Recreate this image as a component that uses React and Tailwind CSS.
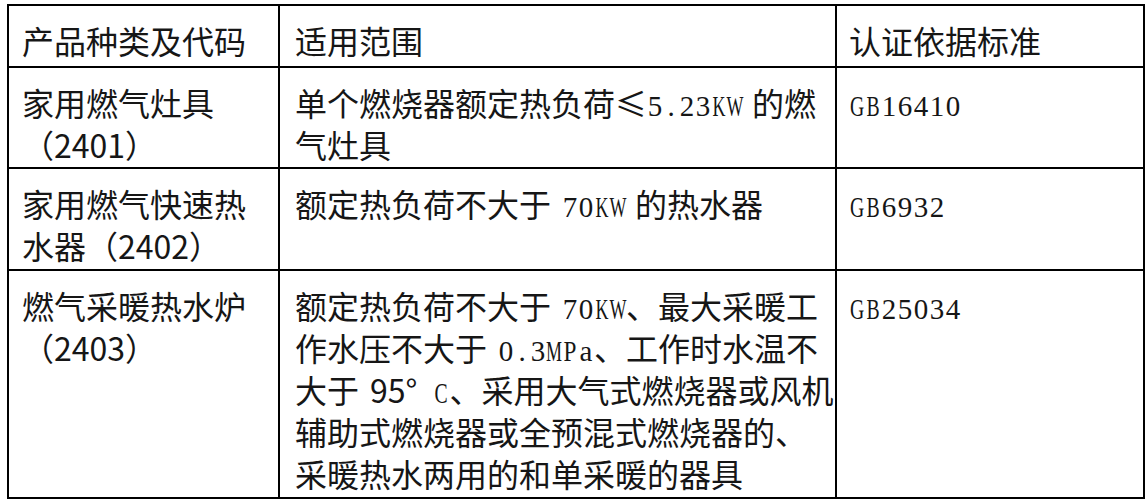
import React from "react";

const SCALE = {
  W: "scale-x-[0.62]",
  M: "scale-x-[0.62]",
  K: "scale-x-[0.62]",
  G: "scale-x-[0.68]",
  B: "scale-x-[0.68]",
  C: "scale-x-[0.68]",
  P: "scale-x-[0.8]",
};

const Gap = ({ w = "w-[11px]" }) => (
  <span className={`inline-block ${w} leading-[0px]`}>{"\u00a0"}</span>
);

const M = ({ children }) => (
  <span className="font-['Liberation_Serif',serif] text-[29px] leading-[0px]">
    {String(children)
      .split("")
      .map((c, i) => (
        <span
          key={i}
          className={`inline-flex w-[16px] justify-center leading-[0px] ${SCALE[c] || ""}`}
        >
          {c === " " ? "\u00a0" : c}
        </span>
      ))}
  </span>
);

const Cell = ({ children, pl = "pl-[13px]" }) => (
  <div className={`bg-white ${pl} pt-[13px] leading-[42px] whitespace-nowrap`}>{children}</div>
);

export default function App() {
  return (
    <div className="w-[1148px] h-[500px] bg-white pl-[7px] pt-[4px] font-['Noto_Sans_CJK_SC',sans-serif] text-[32px] font-normal text-[#161616]">
      <div className="grid w-fit grid-cols-[269px_555px_306px] grid-rows-[60px_99px_100px_226px] gap-[2px] bg-black p-[2px]">
        <Cell>产品种类及代码</Cell>
        <Cell pl="pl-[15px]">适用范围</Cell>
        <Cell pl="pl-[12px]">认证依据标准</Cell>

        <Cell>
          家用燃气灶具
          <br />
          （2401）
        </Cell>
        <Cell pl="pl-[15px]">
          单个燃烧器额定热负荷≤<M>5.23KW</M>
          <Gap w="w-[9px]" />
          的燃
          <br />
          气灶具
        </Cell>
        <Cell pl="pl-[12px]">
          <M>GB16410</M>
        </Cell>

        <Cell>
          家用燃气快速热
          <br />
          水器（2402）
        </Cell>
        <Cell pl="pl-[15px]">
          额定热负荷不大于
          <Gap />
          <M>70KW</M>
          <Gap w="w-[9px]" />
          的热水器
        </Cell>
        <Cell pl="pl-[12px]">
          <M>GB6932</M>
        </Cell>

        <Cell>
          燃气采暖热水炉
          <br />
          （2403）
        </Cell>
        <Cell pl="pl-[15px]">
          额定热负荷不大于
          <Gap />
          <M>70KW</M>、最大采暖工
          <br />
          作水压不大于
          <Gap />
          <M>0.3MPa</M>、工作时水温不
          <br />
          大于
          <Gap />
          95°<M> C</M>、采用大气式燃烧器或风机
          <br />
          辅助式燃烧器或全预混式燃烧器的、
          <br />
          采暖热水两用的和单采暖的器具
        </Cell>
        <Cell pl="pl-[12px]">
          <M>GB25034</M>
        </Cell>
      </div>
    </div>
  );
}
